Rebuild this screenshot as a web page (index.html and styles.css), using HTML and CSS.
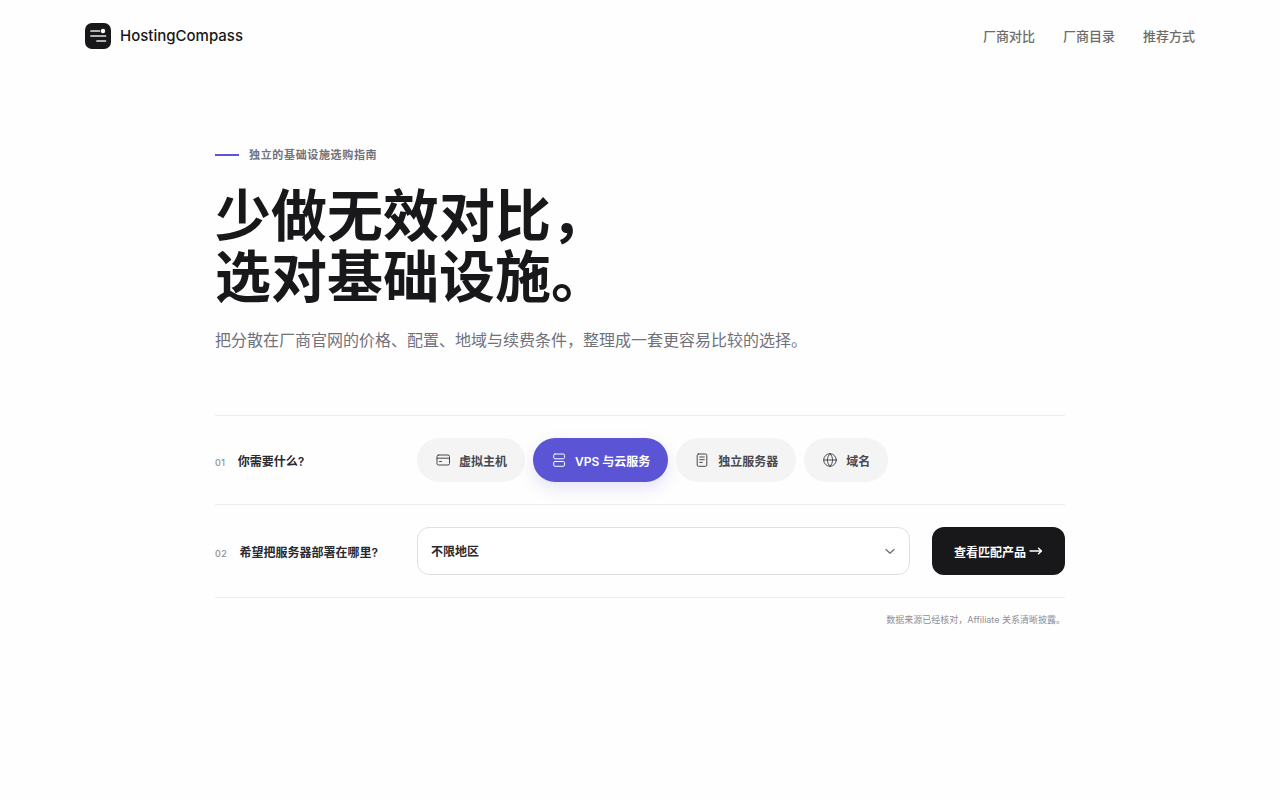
FILE: index.html
```html
<!DOCTYPE html>
<html lang="zh-CN">
<head>
    <meta charset="UTF-8">
    <meta name="viewport" content="width=device-width, initial-scale=1.0">
    <title>HostingCompass</title>
    <link rel="stylesheet" href="styles.css">
</head>
<body>
    <header class="site-header">
        <a class="brand" href="/">
            <svg class="brand-mark" viewBox="0 0 26 26" aria-hidden="true">
                <rect width="26" height="26" rx="7" fill="#18181a"/>
                <path d="M6 8h8.500M6 13h14.500M12 18h8.500" stroke="#e4e4e6" stroke-width="1.700" stroke-linecap="round"/>
                <circle cx="18" cy="8" r="2.200" fill="#fff"/>
            </svg>
            <span>HostingCompass</span>
        </a>
        <nav class="site-nav">
            <a href="/compare">厂商对比</a>
            <a href="/providers">厂商目录</a>
            <a href="/method">推荐方式</a>
        </nav>
    </header>

    <main class="hero">
        <p class="eyebrow">独立的基础设施选购指南</p>
        <h1>少做无效对比，<br>选对基础设施。</h1>
        <p class="intro">把分散在厂商官网的价格、配置、地域与续费条件，整理成一套更容易比较的选择。</p>

        <form class="finder" action="/results">
            <div class="finder-row">
                <div class="finder-label" id="need-label"><span class="step">01</span>你需要什么?</div>
                <div class="chips" role="group" aria-labelledby="need-label">
                    <button type="button" class="chip">
                        <svg class="icon" viewBox="0 0 16 16" aria-hidden="true"><rect x="2" y="3" width="12.500" height="10" rx="1.500"/><path d="M2 6.200h12.500M4.500 9.500h2"/></svg>
                        虚拟主机
                    </button>
                    <button type="button" class="chip active" aria-pressed="true">
                        <svg class="icon" viewBox="0 0 16 16" aria-hidden="true"><rect x="2.700" y="2" width="10.800" height="4.800" rx="1.300"/><rect x="2.700" y="9.500" width="10.800" height="4.800" rx="1.300"/></svg>
                        VPS 与云服务
                    </button>
                    <button type="button" class="chip">
                        <svg class="icon" viewBox="0 0 16 16" aria-hidden="true"><rect x="3.200" y="2" width="9.600" height="12.300" rx="1.300"/><path d="M5.700 5h4.600M5.700 7.700h4.600M5.700 10.400h2.600"/></svg>
                        独立服务器
                    </button>
                    <button type="button" class="chip">
                        <svg class="icon" viewBox="0 0 16 16" aria-hidden="true"><circle cx="8" cy="8" r="6.300"/><path d="M1.700 8h12.600M8 1.700c3.500 3.500 3.500 9.100 0 12.600M8 1.700c-3.500 3.500-3.500 9.100 0 12.600"/></svg>
                        域名
                    </button>
                </div>
            </div>
            <div class="finder-row">
                <label class="finder-label" for="region"><span class="step">02</span>希望把服务器部署在哪里?</label>
                <div class="select-wrap">
                    <select id="region" name="region">
                        <option>不限地区</option>
                    </select>
                    <svg class="chevron" viewBox="0 0 16 16" aria-hidden="true"><path d="M4 6.500l4 3.800 4-3.800"/></svg>
                </div>
                <button type="submit" class="submit">
                    查看匹配产品
                    <svg class="arrow" viewBox="0 0 14 12" aria-hidden="true"><path d="M1 6h11.500M9.500 3.300l3 2.700-3 2.700"/></svg>
                </button>
            </div>
        </form>
        <p class="note">数据来源已经核对，Affiliate 关系清晰披露。</p>
    </main>
</body>
</html>
```

FILE: styles.css
```css
* {
    box-sizing: border-box;
}
body {
    margin: 0;
    background: #fefefe;
    color: #18181a;
    font-family: Inter, "Noto Sans CJK SC", sans-serif;
}
button, select {
    font-family: inherit;
    cursor: pointer;
}
.site-header {
    display: flex;
    justify-content: space-between;
    align-items: center;
    max-width: 1158px;
    height: 72px;
    margin: 0 auto;
    padding: 0 24px;
}
.brand {
    display: flex;
    align-items: center;
    gap: 9px;
    color: #18181a;
    font-size: 15px;
    font-weight: 500;
    line-height: 16px;
    text-decoration: none;
}
.brand-mark {
    width: 26px;
    height: 26px;
}
.site-nav {
    display: flex;
    gap: 28px;
    padding-bottom: 2px;
}
.site-nav a {
    color: #6d6d68;
    font-size: 13px;
    font-weight: 500;
    text-decoration: none;
}
.hero {
    max-width: 898px;
    margin: 0 auto;
    padding: 73px 24px;
}
.eyebrow {
    display: flex;
    align-items: center;
    gap: 10px;
    margin: 0 0 20px;
    color: #71717a;
    font-size: 11px;
    font-weight: 600;
    line-height: 20px;
    letter-spacing: 0.06em;
}
.eyebrow::before {
    content: "";
    width: 24px;
    height: 2px;
    background: #5b55d6;
}
h1 {
    margin: 0 0 18px;
    padding-top: 1px;
    font-size: 56px;
    font-weight: 700;
    line-height: 61px;
}
.intro {
    margin: 0 0 61px;
    color: #71717a;
    font-size: 16px;
    line-height: 28px;
}
.finder {
    border-top: 1px solid #ededef;
}
.finder-row {
    display: flex;
    flex-wrap: wrap;
    align-items: center;
    gap: 22px;
    padding: 22px 0;
    border-bottom: 1px solid #ededef;
}
.finder-label {
    width: 180px;
    color: #29292e;
    font-size: 12px;
    font-weight: 600;
}
.step {
    margin-right: 12px;
    color: #8e8e90;
    font-size: 9px;
    font-weight: 500;
    letter-spacing: 0.06em;
}
.chips {
    display: flex;
    flex-wrap: wrap;
    gap: 8px;
}
.chip {
    display: flex;
    align-items: center;
    gap: 8px;
    height: 44px;
    padding: 0 18px;
    border: 0;
    border-radius: 22px;
    background: #f4f4f5;
    color: #48484e;
    font-size: 12px;
    font-weight: 600;
}
.chip.active {
    background: #5b55d6;
    color: #fff;
    box-shadow: 0 6px 16px rgba(91, 85, 214, 0.16);
}
.icon, .chevron, .arrow {
    fill: none;
    stroke: currentColor;
    stroke-linecap: round;
    stroke-linejoin: round;
}
.icon {
    width: 16px;
    height: 16px;
}
.select-wrap {
    position: relative;
    flex: 1;
}
.select-wrap select {
    display: block;
    width: 100%;
    height: 48px;
    padding: 0 40px 0 13px;
    border: 1px solid #dfdfe2;
    border-radius: 12px;
    background: #fff;
    color: #29292e;
    font-size: 12px;
    font-weight: 600;
    appearance: none;
}
.chevron {
    position: absolute;
    top: 16px;
    right: 12px;
    width: 16px;
    height: 16px;
    color: #71717a;
    stroke-width: 1.3;
    pointer-events: none;
}
.submit {
    display: flex;
    align-items: center;
    gap: 3px;
    height: 48px;
    padding: 0 22px;
    border: 0;
    border-radius: 12px;
    background: #18181a;
    color: #fff;
    font-size: 12px;
    font-weight: 600;
}
.arrow {
    width: 14px;
    height: 12px;
    stroke-width: 1.4;
}
.note {
    margin: 13px 0 0;
    color: #8e8e96;
    font-size: 9px;
    line-height: 18px;
    text-align: right;
}
```
